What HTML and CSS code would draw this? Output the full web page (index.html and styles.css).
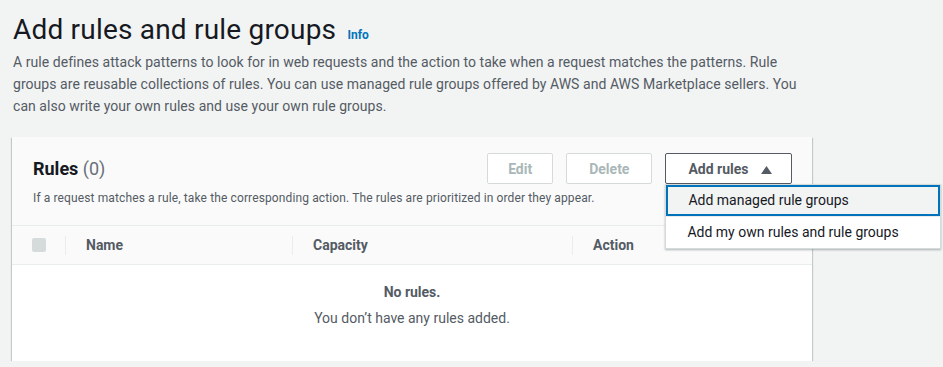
FILE: index.html
```html
<!DOCTYPE html>
<html lang="en">
<head>
    <meta charset="UTF-8">
    <meta name="viewport" content="width=device-width, initial-scale=1.0">
    <title>Add rules and rule groups</title>
    <link rel="stylesheet" href="styles.css">
</head>
<body>

    <!-- Page Header -->
    <div class="page">
        <h1 class="page-title">Add rules and rule groups <a class="info" href="#">Info</a></h1>
        <p class="page-desc">A rule defines attack patterns to look for in web requests and the action to take when a request matches the patterns. Rule groups are reusable collections of rules. You can use managed rule groups offered by AWS and AWS Marketplace sellers. You can also write your own rules and use your own rule groups.</p>

        <!-- Rules Card -->
        <div class="card">
            <div class="card-header">
                <div class="card-heading">
                    <h2 class="card-title">Rules <span class="count">(0)</span></h2>
                    <div class="actions">
                        <button class="btn" disabled>Edit</button>
                        <button class="btn btn-wide" disabled>Delete</button>
                        <div class="dropdown">
                            <button class="btn btn-normal">Add rules
                                <svg class="caret" width="11" height="8" viewBox="0 0 11 8"><polygon points="5.5,0 11,8 0,8" fill="#545b64"/></svg>
                            </button>
                            <ul class="dropdown-menu">
                                <li class="selected">Add managed rule groups</li>
                                <li>Add my own rules and rule groups</li>
                            </ul>
                        </div>
                    </div>
                </div>
                <p class="card-desc">If a request matches a rule, take the corresponding action. The rules are prioritized in order they appear.</p>
            </div>

            <table class="rules-table">
                <thead>
                    <tr>
                        <th class="col-check"><span class="checkbox"></span></th>
                        <th class="col-name"><span>Name</span></th>
                        <th class="col-capacity"><span>Capacity</span></th>
                        <th class="col-action"><span>Action</span></th>
                    </tr>
                </thead>
                <tbody>
                    <tr>
                        <td colspan="4" class="empty">
                            <strong>No rules.</strong>
                            <p>You don’t have any rules added.</p>
                        </td>
                    </tr>
                </tbody>
            </table>
        </div>
    </div>

</body>
</html>
```

FILE: styles.css
```css
body {
    font-family: Roboto, "Noto Sans", Arial, sans-serif;
    margin: 0;
    padding: 0;
    background-color: #f2f3f3;
    color: #16191f;
}
.page {
    padding: 12px 12px 0 12px;
}
.page-title {
    font-size: 28px;
    font-weight: 400;
    line-height: 36px;
    margin: 0 0 0 1px;
    color: #16191f;
    letter-spacing: 0.2px;
}
.info {
    font-size: 12px;
    font-weight: bold;
    color: #0073bb;
    text-decoration: none;
    margin-left: 4px;
    letter-spacing: 0;
}
.page-desc {
    font-size: 14px;
    line-height: 22px;
    color: #545b64;
    margin: -2px 0 0 1px;
    width: 790px;
    letter-spacing: 0.05px;
}

/* Card */
.card {
    width: 800px;
    margin-top: 20px;
    background-color: #fff;
    box-shadow: 0 1px 1px 0 rgba(0, 28, 36, 0.3), 1px 1px 1px 0 rgba(0, 28, 36, 0.15), -1px 1px 1px 0 rgba(0, 28, 36, 0.15);
}
.card-header {
    background-color: #fafafa;
    padding: 16px 20px 0 21px;
    height: 72px;
}
.card-heading {
    display: flex;
    justify-content: space-between;
    align-items: center;
}
.card-title {
    font-size: 18px;
    font-weight: bold;
    margin: 0;
    color: #16191f;
}
.count {
    font-weight: 400;
    color: #687078;
}
.actions {
    display: flex;
    gap: 13px;
}
.btn {
    font-family: inherit;
    font-size: 14px;
    font-weight: bold;
    height: 31px;
    padding: 0 20px;
    background-color: #fff;
    border: 1px solid #d5dbdb;
    border-radius: 2px;
    color: #aab7b8;
}
.btn-wide {
    padding: 0 22px;
}
.btn-normal {
    border-color: #545b64;
    color: #545b64;
    padding: 0 19px 0 22px;
}
.caret {
    margin-left: 9px;
    vertical-align: 0;
}
.dropdown {
    position: relative;
}
.dropdown-menu {
    position: absolute;
    top: 31px;
    left: 0;
    width: 274px;
    margin: 0;
    padding: 0;
    list-style: none;
    background-color: #fff;
    border: 1px solid #d5dbdb;
    box-shadow: 0 1px 2px rgba(0, 28, 36, 0.3);
    z-index: 2;
}
.dropdown-menu li {
    font-size: 14px;
    color: #16191f;
    height: 31px;
    line-height: 31px;
    padding: 0 21px;
    border-top: 1px solid #eaeded;
}
.dropdown-menu li.selected {
    border: 2px solid #0073bb;
    background-color: #f2f3f3;
    height: 27px;
    line-height: 27px;
    padding: 0 20px;
}
.card-desc {
    font-size: 12px;
    color: #545b64;
    margin: 7px 0 0 0;
    letter-spacing: 0.12px;
}

/* Table */
.rules-table {
    width: 100%;
    border-collapse: collapse;
}
.rules-table thead tr {
    background-color: #fafafa;
    border-top: 1px solid #eaeded;
    border-bottom: 1px solid #eaeded;
}
.rules-table th {
    height: 38px;
    padding: 0;
    text-align: left;
    font-size: 14px;
    font-weight: bold;
    color: #545b64;
}
.rules-table th span {
    display: block;
    border-left: 1px solid #eaeded;
    padding-left: 20px;
    line-height: 19px;
}
.col-check {
    width: 53px;
}
.col-name {
    width: 227px;
}
.col-capacity {
    width: 280px;
}
.rules-table th .checkbox {
    display: block;
    width: 14px;
    height: 14px;
    margin-left: 20px;
    background-color: #d5dbdb;
    border: none;
    border-radius: 2px;
    padding: 0;
}
.empty {
    text-align: center;
    vertical-align: top;
    height: 78px;
    padding: 18px 0 0 0;
    color: #545b64;
    font-size: 14px;
    line-height: 19px;
}
.empty strong {
    display: block;
}
.empty p {
    margin: 7px 0 0 0;
}
```
